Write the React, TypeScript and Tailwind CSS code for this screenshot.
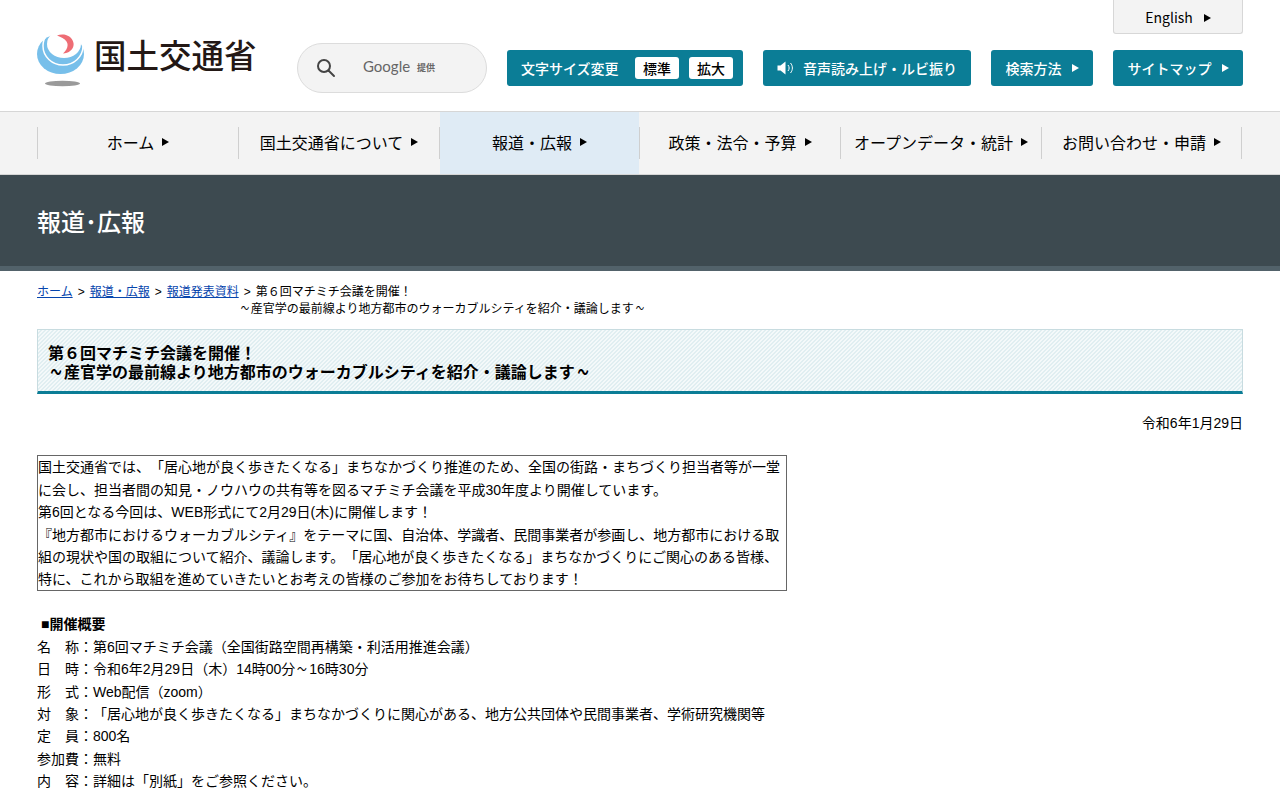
import React from 'react';

const Arrow = ({ className }: { className: string }) => (
  <span className={`inline-block w-0 h-0 border-y-[4px] border-y-transparent border-l-[7px] ${className}`} />
);

// wave dash is narrower in the reference than the installed font draws it
const Wave = () => <span className="inline-block scale-x-[0.7]">～</span>;

// Ministry symbol
const Logo = () => (
  <svg width="50" height="54" viewBox="0 0 50 54">
    <ellipse cx="23.5" cy="20" rx="23.5" ry="20" fill="#77bfea" />
    <ellipse cx="26" cy="12" rx="20" ry="19" fill="none" stroke="#fff" strokeWidth="1.5" />
    <ellipse cx="27" cy="10" rx="17" ry="14" fill="#fff" />
    <path d="M20 1.5 C26 -1 35 1 36.5 9 C37.5 15 32 19 26 19.5 C30 16 32 11 29.5 7.5 C27.5 4.5 24 3 20 1.5 Z" fill="#ee6d75" />
    <ellipse cx="25.5" cy="49.5" rx="17.5" ry="2.8" fill="#9a9a9a" />
  </svg>
);

const HeadButton = ({ className, children }: { className: string; children: React.ReactNode }) => (
  <a className={`h-9 flex items-center justify-center rounded-[3px] bg-[#0b7d96] text-white text-[14px] font-medium ${className}`}>
    {children}
  </a>
);

const NAV = ['ホーム', '国土交通省について', '報道・広報', '政策・法令・予算', 'オープンデータ・統計', 'お問い合わせ・申請'];

const Header = () => (
  <header className="relative h-[111px] px-[37px] bg-white">
    <div className="flex justify-end">
      <a className="w-[130px] h-[34px] flex items-center justify-center gap-[11px] pt-[2px] bg-[#f3f3f3] border border-t-0 border-[#d7d7d7] rounded-b-[3px] text-[14px] text-black">
        English
        <Arrow className="border-l-black" />
      </a>
    </div>
    <div className="flex mt-[16px]">
      <div className="w-[260px] flex items-start -mt-[16px]">
        <Logo />
        <span className="ml-[7px] mt-[1px] text-[32.5px] leading-[38px] font-medium text-[#231815]">国土交通省</span>
      </div>
      <div className="w-[190px] h-[50px] flex items-center -mt-[7px] bg-[#f3f3f3] border border-[#dcdcdc] rounded-full">
        <svg className="ml-[18px]" width="20" height="20" viewBox="0 0 20 20" fill="none" stroke="#444" strokeWidth="2">
          <circle cx="8" cy="8" r="6" />
          <path d="M12.5 12.5 L18 18" strokeLinecap="round" />
        </svg>
        <span className="ml-[27px] mb-[4px] text-[15px] font-['Lato'] text-[#666]">Google</span>
        <span className="ml-[7px] text-[9px] font-bold text-[#666]">提供</span>
      </div>
      <div className="flex ml-[20px] gap-[20px]">
        <div className="w-[236px] h-9 flex items-center pl-[14px] rounded-[3px] bg-[#0b7d96] text-white text-[14px] font-medium">
          <span className="w-[114px]">文字サイズ変更</span>
          <span className="w-[44px] h-[22px] flex items-center justify-center rounded-[3px] bg-white text-black text-[14px]">標準</span>
          <span className="w-[44px] h-[22px] ml-[10px] flex items-center justify-center rounded-[3px] bg-white text-black text-[14px]">拡大</span>
        </div>
        <HeadButton className="w-[208px] gap-[8px]">
          <svg width="18" height="14" viewBox="0 0 18 14" fill="none">
            <path d="M0.5 4.5 H3.5 L8.5 0.5 V13.5 L3.5 9.5 H0.5 Z" fill="#fff" />
            <path d="M11 4 C12.5 6 12.5 8 11 10 M13.5 2 C16 5 16 9 13.5 12" stroke="#fff" strokeWidth="1" />
          </svg>
          音声読み上げ・ルビ振り
        </HeadButton>
        <HeadButton className="w-[102px] gap-[10px]">
          検索方法
          <Arrow className="border-l-white" />
        </HeadButton>
        <HeadButton className="w-[130px] gap-[10px]">
          サイトマップ
          <Arrow className="border-l-white" />
        </HeadButton>
      </div>
    </div>
  </header>
);

const GlobalNav = () => (
  <nav className="h-[64px] px-[37px] flex items-center bg-[#f3f3f3] border-y border-[#d6d6d6]">
    <ul className="grid grid-cols-[201px_201px_200px_201px_201px_200px] border-l border-[#cfcfcf]">
      {NAV.map((label, i) => (
        <li key={label} className="relative h-[32px] pb-[2px] flex items-center justify-center gap-[8px] border-r border-[#cfcfcf] text-[16px] text-black">
          {i === 2 && <span className="absolute -inset-y-[15px] inset-x-0 bg-[#dfebf5]" />}
          <span className="relative">{label}</span>
          <Arrow className="relative border-l-black" />
        </li>
      ))}
    </ul>
  </nav>
);

export default function App() {
  return (
    <div className="h-screen overflow-hidden bg-white text-black [text-spacing-trim:space-all] font-['Liberation_Sans','Noto_Sans_CJK_JP',sans-serif]">
      <div className="font-['Noto_Sans_CJK_JP','Noto_Sans',sans-serif]">
        <Header />
        <GlobalNav />
        {/* Section title band */}
        <div className="h-[96px] pt-[28px] px-[37px] bg-[#3d4a50] border-b-[5px] border-[#52626a]">
          <p className="text-[24px] leading-[36px] font-medium text-white">報道･広報</p>
        </div>
      </div>

      <main className="px-[37px]">
        {/* Breadcrumb */}
        <div className="pt-[13px] flex text-[12px] leading-[17px]">
          <div>
            <a className="text-[#0645ad] underline">ホーム</a>
            <span className="px-[5px]">&gt;</span>
            <a className="text-[#0645ad] underline">報道・広報</a>
            <span className="px-[5px]">&gt;</span>
            <a className="text-[#0645ad] underline">報道発表資料</a>
          </div>
          <div>
            <span className="px-[5px]">&gt;</span>
            第６回マチミチ会議を開催！
            <br />
            <Wave />産官学の最前線より地方都市のウォーカブルシティを紹介・議論します<Wave />
          </div>
        </div>

        {/* Page title */}
        <h1 className="mt-[11px] h-[65px] pt-[14px] pl-[10px] border border-[#c8dce0] border-b-[3px] border-b-[#0b7d96] text-[16px] leading-[19px] font-bold bg-size-[4px_4px] bg-[linear-gradient(135deg,#f4f9fa_25%,#e0eef1_25%,#e0eef1_50%,#f4f9fa_50%,#f4f9fa_75%,#e0eef1_75%)]">
          第６回マチミチ会議を開催！
          <br />
          <Wave />産官学の最前線より地方都市のウォーカブルシティを紹介・議論します<Wave />
        </h1>

        <p className="mt-[18px] text-right text-[14px] leading-[22.4px]">令和6年1月29日</p>

        {/* Summary box */}
        <div className="mt-[21px] w-[750px] h-[136px] border border-[#666] text-[14px] leading-[22.4px]">
          国土交通省では、「居心地が良く歩きたくなる」まちなかづくり推進のため、全国の街路・まちづくり担当者等が一堂に会し、担当者間の知見・ノウハウの共有等を図るマチミチ会議を平成30年度より開催しています。
          <br />
          第6回となる今回は、WEB形式にて2月29日(木)に開催します！
          <br />
          『地方都市におけるウォーカブルシティ』をテーマに国、自治体、学識者、民間事業者が参画し、地方都市における取組の現状や国の取組について紹介、議論します。「居心地が良く歩きたくなる」まちなかづくりにご関心のある皆様、特に、これから取組を進めていきたいとお考えの皆様のご参加をお待ちしております！
        </div>

        {/* Outline */}
        <div className="mt-[22px] text-[14px] leading-[22.4px]">
          <p className="font-bold pl-[4px]">■開催概要</p>
          <p>名　称：第6回マチミチ会議（全国街路空間再構築・利活用推進会議）</p>
          <p>日　時：令和6年2月29日（木）14時00分<Wave />16時30分</p>
          <p>形　式：Web配信（zoom）</p>
          <p>対　象：「居心地が良く歩きたくなる」まちなかづくりに関心がある、地方公共団体や民間事業者、学術研究機関等</p>
          <p>定　員：800名</p>
          <p>参加費：無料</p>
          <p>内　容：詳細は「別紙」をご参照ください。</p>
        </div>
      </main>
    </div>
  );
}
